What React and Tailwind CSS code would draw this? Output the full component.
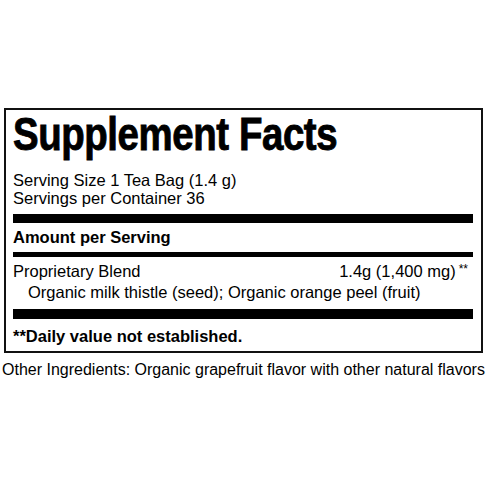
const BODY = { fontFamily: '"Liberation Sans", Arial, Helvetica, sans-serif' };

function Bar({ h }) {
  return <div className={`bg-black ${h}`} />;
}

export default function App() {
  return (
    <div className="w-[490px] h-[490px] bg-white text-black pt-[108px] pl-[4px]" style={BODY}>
      {/* Label box */}
      <div className="w-[479px] border-2 border-[#111] pl-[7px] pr-[8px] pb-[6px]">
        <h1 className="mt-px h-[46px] text-[46px] leading-[46px] font-bold whitespace-nowrap">
          <span className="inline-block origin-left scale-x-[0.835] tracking-[-0.5px] [-webkit-text-stroke:0.9px_black]">
            Supplement Facts
          </span>
        </h1>

        <div className="mt-[14px] text-[16.5px] leading-[18px]">
          <p>Serving Size 1 Tea Bag (1.4 g)</p>
          <p>Servings per Container 36</p>
        </div>

        <div className="mt-[7px]">
          <Bar h="h-[9px]" />
        </div>

        <p className="mt-[5px] text-[16.5px] leading-[18px] font-bold">Amount per Serving</p>

        <div className="mt-[6px]">
          <Bar h="h-[5px]" />
        </div>

        {/* Ingredient rows */}
        <div className="mt-[5px] text-[16.5px] leading-[18px]">
          <div className="flex justify-between pr-[5px]">
            <span>Proprietary Blend</span>
            <span>
              1.4g (1,400 mg)
              <span className="relative top-px ml-[3px] text-[12px] align-top leading-[12px]">**</span>
            </span>
          </div>
          <p className="mt-[3px] pl-[15px]">Organic milk thistle (seed); Organic orange peel (fruit)</p>
        </div>

        <div className="mt-[8px]">
          <Bar h="h-[10px]" />
        </div>

        <p className="mt-[8px] text-[16.5px] leading-[18px] font-bold">**Daily value not established.</p>
      </div>

      <p className="mt-[8px] -ml-[2px] text-[16px] leading-[18px]">
        Other Ingredients: Organic grapefruit flavor with other natural flavors
      </p>
    </div>
  );
}
